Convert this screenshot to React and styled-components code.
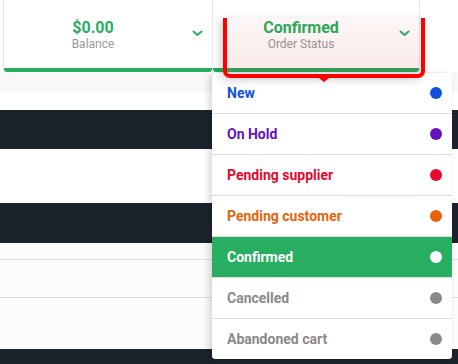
import React from 'react';
import styled, { createGlobalStyle } from 'styled-components';

const GlobalStyle = createGlobalStyle`
    html, body {
        margin: 0;
        padding: 0;
        background: #fff;
        font-family: Roboto, "Liberation Sans", sans-serif;
    }
    * { box-sizing: border-box; }
`;

const Page = styled.div`
    position: relative;
    width: 458px;
    height: 364px;
    overflow: hidden;
    background: #fff;
`;

const TopRow = styled.div`
    display: flex;
    height: 72px;
    padding-left: 3px;
    background: #fff;
`;

const StatCard = styled.div`
    width: ${p => p.$width}px;
    height: 72px;
    display: flex;
    flex-direction: column;
    border-left: 1px solid #e6e6e6;
    border-right: ${p => (p.$last ? '1px solid #e6e6e6' : 'none')};
`;

const CardBody = styled.div`
    flex: 1;
    display: grid;
    grid-template-columns: 1fr 30px;
    align-items: center;
`;

const CardText = styled.div`
    display: flex;
    flex-direction: column;
    align-items: center;
`;

const Value = styled.div`
    font-size: 16px;
    line-height: 19px;
    font-weight: 700;
    color: #27ae60;
`;

const Label = styled.div`
    font-size: 12px;
    line-height: 14px;
    color: #9a9a9a;
`;

const ChevronBox = styled.div`
    display: flex;
    justify-content: center;
    padding-bottom: 2px;
`;

const GreenBar = styled.div`
    height: 4px;
    background: #27ae60;
    border-radius: 0 0 3px 3px;
`;

const Band = styled.div`
    height: ${p => p.$h}px;
    background: ${p => p.$bg || '#fff'};
    border-bottom: ${p => (p.$line ? '1px solid #dcdcdc' : 'none')};
`;

const Highlight = styled.div`
    position: absolute;
    z-index: 2;
    left: 223px;
    top: 18px;
    width: 202px;
    height: 60px;
    border: 4px solid #ff0000;
    border-top: none;
    border-radius: 0 0 7px 7px;
    background: linear-gradient(rgba(200, 0, 0, 0.03), rgba(200, 0, 0, 0.09));
    box-shadow: -3px 2px 8px rgba(0, 0, 0, 0.18);
    &::after {
        content: "";
        position: absolute;
        left: calc(50% - 5px);
        top: calc(100% + 4px);
        border-top: 4px solid #ff0000;
        border-left: 5px solid transparent;
        border-right: 5px solid transparent;
    }
`;

const Dropdown = styled.ul`
    position: absolute;
    z-index: 1;
    left: 212px;
    top: 73px;
    width: 240px;
    margin: 0;
    padding: 0;
    list-style: none;
    background: #fff;
    border-radius: 4px;
    overflow: hidden;
    box-shadow: -3px 2px 7px rgba(0, 0, 0, 0.16);
`;

const Item = styled.li`
    height: 41px;
    display: flex;
    align-items: center;
    justify-content: space-between;
    padding: 0 10px 0 15px;
    font-size: 14px;
    font-weight: 700;
    color: ${p => (p.$active ? '#fff' : p.$color)};
    background: ${p => (p.$active ? '#27ae60' : '#fff')};
    border-bottom: 1px solid #dcdcdc;
    &:last-child {
        border-bottom: none;
        height: 40px;
    }
`;

const Dot = styled.span`
    width: 12px;
    height: 12px;
    border-radius: 50%;
    background: ${p => (p.$active ? '#fff' : p.$color)};
`;

const Chevron = () => (
    <svg width="11" height="7" viewBox="0 0 11 7">
        <polyline points="1.5,1.5 5.5,5 9.5,1.5" fill="none" stroke="#27ae60" strokeWidth="2" strokeLinecap="round" />
    </svg>
);

const statuses = [
    { name: 'New', color: '#1150d8' },
    { name: 'On Hold', color: '#6611bb' },
    { name: 'Pending supplier', color: '#e8082f' },
    { name: 'Pending customer', color: '#e8640c' },
    { name: 'Confirmed', color: '#27ae60', active: true },
    { name: 'Cancelled', color: '#8a8a8a' },
    { name: 'Abandoned cart', color: '#8a8a8a' },
];

function App() {
    return (
        <Page>
            <GlobalStyle />
            <TopRow>
                <StatCard $width={209}>
                    <CardBody>
                        <CardText>
                            <Value>$0.00</Value>
                            <Label>Balance</Label>
                        </CardText>
                        <ChevronBox><Chevron /></ChevronBox>
                    </CardBody>
                    <GreenBar />
                </StatCard>
                <StatCard $width={208} $last>
                    <CardBody>
                        <CardText>
                            <Value>Confirmed</Value>
                            <Label>Order Status</Label>
                        </CardText>
                        <ChevronBox><Chevron /></ChevronBox>
                    </CardBody>
                    <GreenBar />
                </StatCard>
            </TopRow>
            <Band $h={20} $bg="#f8f8f8" />
            <Band $h={18} />
            <Band $h={39} $bg="#1b232d" />
            <Band $h={54} />
            <Band $h={40} $bg="#1b232d" />
            <Band $h={17} $bg="#fcfcfc" $line />
            <Band $h={38} $bg="#fcfcfc" $line />
            <Band $h={51} $bg="#fcfcfc" />
            <Band $h={16} $bg="#1b232d" />

            <Highlight />
            <Dropdown>
                {statuses.map(s => (
                    <Item key={s.name} $color={s.color} $active={s.active}>
                        {s.name}
                        <Dot $color={s.color} $active={s.active} />
                    </Item>
                ))}
            </Dropdown>
        </Page>
    );
}

export default App;
